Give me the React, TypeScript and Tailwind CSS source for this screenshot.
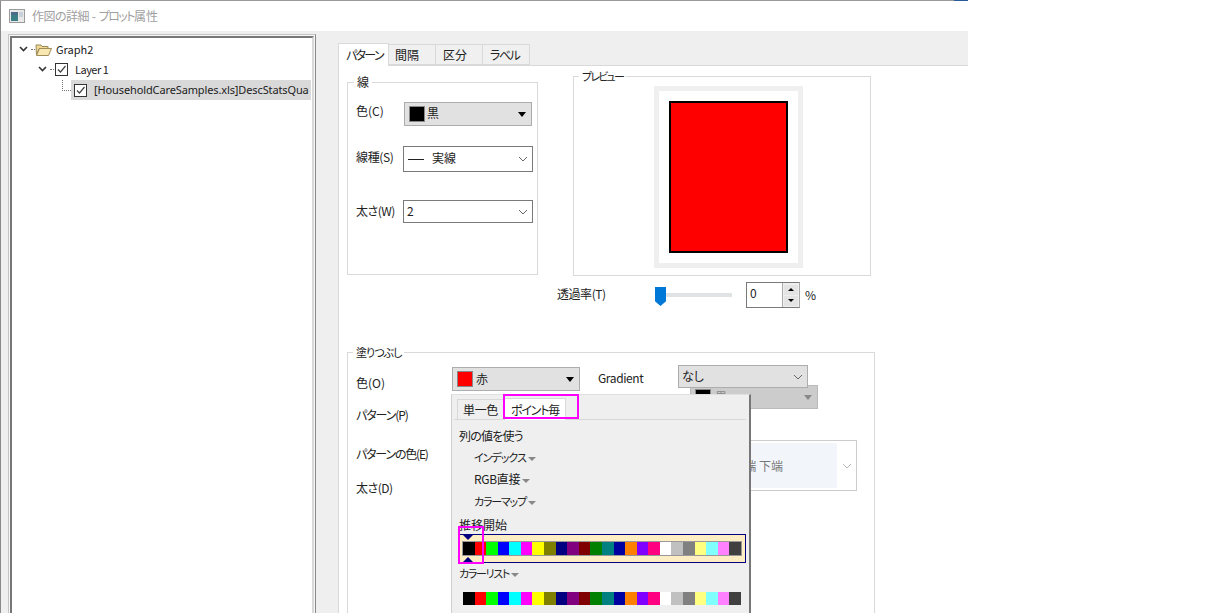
import React from "react";

const font = "font-['Noto_Sans_CJK_JP','Noto_Sans',sans-serif] [font-feature-settings:'palt']";
const colors = ["#000000","#ff0000","#00ff00","#0000ff","#00ffff","#ff00ff","#ffff00","#808000","#000080","#800080","#800000","#008000","#008080","#0000a0","#ff8000","#8000ff","#ff0080","#ffffff","#c0c0c0","#808080","#ffff80","#80ffff","#ff80ff","#404040"];

function Chevron({ className = "" }: { className?: string }) {
  return (
    <svg width="10" height="6" viewBox="0 0 10 6" className={className}>
      <path d="M1 1l4 4 4-4" fill="none" stroke="currentColor" strokeWidth="1" />
    </svg>
  );
}
function TreeChevron({ className = "" }: { className?: string }) {
  return (
    <svg width="9" height="6" viewBox="0 0 9 6" className={className}>
      <path d="M1 1l3.5 3.5L8 1" fill="none" stroke="#333333" strokeWidth="1.6" />
    </svg>
  );
}
function Caret({ className = "" }: { className?: string }) {
  return <span className={`block w-0 h-0 border-l-[4.5px] border-r-[4.5px] border-t-[5px] border-l-transparent border-r-transparent ${className}`} />;
}
function SmallCaret() {
  return <span className="inline-block w-0 h-0 ml-[2px] mb-[1px] border-l-[4px] border-r-[4px] border-t-[4px] border-l-transparent border-r-transparent border-t-[#888888] tracking-normal" />;
}
function Check({ x = 0 }: { x?: number }) {
  return (
    <span className="flex w-[13px] h-[13px] border border-[#333333] bg-white items-center justify-center shrink-0" style={{ marginLeft: x }}>
      <svg width="11" height="11" viewBox="0 0 11 11"><path d="M2 5.5l2.5 2.5 5-6" fill="none" stroke="#444444" strokeWidth="1.2" /></svg>
    </span>
  );
}
function Label({ children, className = "", small = false }: { children: React.ReactNode; className?: string; small?: boolean }) {
  return <span className={`${small ? "text-[11px]" : "text-[12px]"} leading-[16px] text-[#222222] whitespace-nowrap ${className}`}>{children}</span>;
}
function Legend({ children, className = "" }: { children: React.ReactNode; className?: string }) {
  return <span className={`absolute -top-[9px] bg-white px-[3px] leading-[16px] text-[#222222] whitespace-nowrap ${className}`}>{children}</span>;
}
function Swatches() {
  return (
    <div className="flex h-[13px] w-[278px]">
      {colors.map((c, i) => (
        <span key={i} className="h-full flex-1" style={{ backgroundColor: c }} />
      ))}
    </div>
  );
}

export default function App() {
  return (
    <div className={`relative w-[1228px] h-[613px] bg-white overflow-hidden ${font}`}>
      <div className="w-[968px] h-full flex flex-col">
        <div className="h-[1px] shrink-0 flex">
          <span className="flex-1 bg-[#9a9a9a]" />
          <span className="w-[14px] bg-[#2a5a9a]" />
        </div>
        <div className="h-[30px] flex items-center pl-[8px] gap-[7px] shrink-0 border-l border-l-[#8a8a8e]">
          <svg width="16" height="14" viewBox="0 0 16 14">
            <rect x="0.5" y="0.5" width="15" height="13" fill="#e8e8e8" stroke="#9a9a9a" />
            <rect x="2" y="3" width="7" height="9" fill="#3a7f86" />
            <rect x="2" y="3" width="7" height="3" fill="#4a6a8a" />
            <rect x="10" y="3" width="4" height="5" fill="#c8d0d8" />
          </svg>
          <span className="text-[12px] text-[#a0a0a0] whitespace-nowrap">
            <span className="tracking-[-0.5px]">作図の詳細</span> - <span className="tracking-[-1.5px]">プロット</span>属性
          </span>
        </div>
        <div className="flex-1 flex bg-[#efefef] min-h-0 border-l border-l-[#8a8a8e]">
          <div className="w-[304px] ml-[7px] mt-[3px] border border-[#c4c4c4] border-r-[#888888] bg-[#f7f7f7] p-[1px] shrink-0 box-content -mb-[4px]">
            <div className="h-full border-2 border-[#777777] border-r-[#d8d8d8] border-b-0 bg-white pt-[2px] pr-[1px] pl-[1px]">
              <div className="h-[20px] flex items-center text-[#222222] pb-[2px]">
                <TreeChevron className="ml-[6px]" />
                <span className="w-[4px] ml-[3px] border-t border-dotted border-[#777777]" />
                <svg width="17" height="15" viewBox="0 0 17 15">
                  <path d="M1 3h5l1 1.5h6v2H4L1.5 13z" fill="#f2d893" stroke="#9a8a5a" />
                  <path d="M1.5 13.5L4.5 6.5h12l-3 7z" fill="#f8e7b0" stroke="#a08d58" />
                </svg>
                <span className="ml-[4px] text-[11px] leading-[16px]">Graph2</span>
              </div>
              <div className="h-[20px] flex items-center text-[#222222] pb-[2px]">
                <TreeChevron className="ml-[25px]" />
                <span className="w-[4px] ml-[3px] border-t border-dotted border-[#777777]" />
                <Check x={1} />
                <span className="ml-[7px] text-[11px] leading-[16px] tracking-[-0.5px]">Layer 1</span>
              </div>
              <div className="h-[20px] flex items-center text-[#222222] relative">
                <span className="absolute left-[49px] top-0 h-[11px] w-[9px] border-l border-b border-dotted border-[#777777]" />
                <div className="ml-[58px] h-[20px] flex-1 bg-[#d9d9d9] flex items-center pl-[3px]">
                  <Check />
                  <span className="ml-[7px] text-[11px] whitespace-nowrap font-['Noto_Sans',sans-serif] tracking-[-0.12px]">[HouseholdCareSamples.xls]DescStatsQua</span>
                </div>
              </div>
            </div>
          </div>
          <div className="flex-1 flex flex-col pl-[22px] min-w-0">
            <div className="h-[34px] shrink-0 flex items-end pt-[11px]">
              <div className="h-[23px] w-[51px] -mb-px z-10 bg-white border border-b-0 border-[#d9d9d9] flex items-center pl-[7px]"><Label className="tracking-[-1.7px]">パターン</Label></div>
              <div className="h-[21px] w-[47px] bg-[#f0f0f0] border border-l-0 border-[#d9d9d9] flex items-center pl-[6px]"><Label>間隔</Label></div>
              <div className="h-[21px] w-[47px] bg-[#f0f0f0] border border-l-0 border-[#d9d9d9] flex items-center pl-[7px]"><Label>区分</Label></div>
              <div className="h-[21px] w-[47px] bg-[#f0f0f0] border border-l-0 border-[#d9d9d9] flex items-center pl-[7px]"><Label className="tracking-[-1.5px]">ラベル</Label></div>
            </div>
            <div className="flex-1 bg-white border-t border-l border-[#d9d9d9] relative min-h-0 pt-[16px] pl-[8px]">
              <div className="flex gap-[35px] items-start">
                <div className="relative w-[191px] h-[193px] border border-[#d9d9d9] shrink-0 pl-[8px]">
                  <Legend className="left-[6px] text-[12px]">線</Legend>
                  <div className="flex items-center pt-[19px]">
                    <Label className="w-[48px] -mt-[6px]">色(C)</Label>
                    <div className="h-[24px] w-[128px] bg-[#e1e1e1] border border-[#adadad] flex items-center pl-[4px] pr-[5px]">
                      <span className="w-[16px] h-[16px] bg-black border border-[#888888]" />
                      <Label className="ml-[2px] -mt-[2px]">黒</Label>
                      <Caret className="ml-auto border-t-black" />
                    </div>
                  </div>
                  <div className="flex items-center mt-[20px]">
                    <Label className="w-[47px] -mt-[4px] tracking-[-0.35px]">線種(S)</Label>
                    <div className="h-[26px] w-[130px] border border-[#7a7a7a] flex items-center pl-[4px] pr-[4px]">
                      <span className="w-[16px] border-t border-[#222222]" />
                      <Label className="ml-[8px] -mt-[2px]">実線</Label>
                      <Chevron className="ml-auto text-[#666666]" />
                    </div>
                  </div>
                  <div className="flex items-center mt-[28px]">
                    <Label className="w-[47px] -mt-[2px] tracking-[-0.5px]">太さ(W)</Label>
                    <div className="h-[23px] w-[130px] border border-[#7a7a7a] flex items-center pl-[3px] pr-[4px]">
                      <Label className="-mt-[2px]">2</Label>
                      <Chevron className="ml-auto text-[#666666]" />
                    </div>
                  </div>
                </div>
                <div className="w-[298px] shrink-0 -mt-[6px]">
                  <div className="relative h-[200px] border border-[#d9d9d9] flex pl-[80px] pt-[9px]">
                    <Legend className="left-[5px] text-[11px] tracking-[-1.8px]">プレビュー</Legend>
                    <div className="w-[149px] h-[182px] border-[5px] border-[#efefef] bg-white flex items-center justify-center">
                      <div className="w-[119px] h-[152px] bg-[#ff0000] border-2 border-black" />
                    </div>
                  </div>
                  <div className="flex items-center h-[26px] mt-[6px] -ml-[16px]">
                    <Label className="w-[96px] -mt-[2px] tracking-[-0.45px]">透過率(T)</Label>
                    <div className="relative w-[77px] h-[4px] bg-[#e0e3e3] ml-[2px]">
                      <span className="absolute left-0 -top-[6px] w-[11px] h-[19px] bg-[#0078d7] [clip-path:polygon(0_0,100%_0,100%_75%,50%_100%,0_75%)]" />
                    </div>
                    <div className="ml-[14px] w-[54px] h-[26px] border border-[#7a7a7a] border-r-[#aaaaaa] flex">
                      <Label className="pl-[3px] pt-[2px]">0</Label>
                      <div className="ml-auto w-[17px] h-full flex flex-col items-center justify-center gap-[1px] bg-[#efefef] border-l border-[#aaaaaa]">
                        <span className="w-[14px] h-[10px] bg-[#e4e4e4] flex items-center justify-center"><span className="w-0 h-0 border-l-[3px] border-r-[3px] border-b-[3px] border-l-transparent border-r-transparent border-b-black" /></span>
                        <span className="w-[14px] h-[10px] bg-[#e4e4e4] flex items-center justify-center"><span className="w-0 h-0 border-l-[3px] border-r-[3px] border-t-[3px] border-l-transparent border-r-transparent border-t-black" /></span>
                      </div>
                    </div>
                    <Label className="ml-[5px]">%</Label>
                  </div>
                </div>
              </div>
              <div className="relative w-[528px] h-[300px] border border-[#d9d9d9] mt-[44px]">
                <Legend className="left-[5px] text-[11px] tracking-[-1px]">塗りつぶし</Legend>
                <div className="flex flex-col pl-[8px] pt-[22px]">
                  <Label>色(O)</Label>
                  <Label className="mt-[16px] tracking-[-1.1px]">パターン(P)</Label>
                  <Label className="mt-[23px] tracking-[-1.2px]">パターンの色(E)</Label>
                  <Label className="mt-[18px] tracking-[-0.5px]">太さ(D)</Label>
                </div>
                <div className="absolute left-[104px] top-[14px] h-[24px] w-[128px] bg-[#e1e1e1] border border-[#adadad] flex items-center pl-[4px] pr-[5px]">
                  <span className="w-[16px] h-[16px] bg-[#ff0000] border border-[#888888]" />
                  <Label className="ml-[3px]">赤</Label>
                  <Caret className="ml-auto border-t-black" />
                </div>
                <Label className="absolute left-[250px] top-[17px] tracking-[-0.4px]">Gradient</Label>
                <div className="absolute left-[342px] top-[32px] h-[24px] w-[128px] bg-[#cccccc] border border-[#bbbbbb] flex items-center pl-[4px] pr-[5px]">
                  <span className="w-[16px] h-[16px] bg-black border border-[#888888]" />
                  <Label className="ml-[4px] text-[#888888]!">黒</Label>
                  <Caret className="ml-auto border-t-[#888888]" />
                </div>
                <div className="absolute left-[330px] top-[12px] h-[23px] w-[130px] bg-[#e1e1e1] border border-[#adadad] flex items-center pl-[3px] pr-[4px]">
                  <Label className="-mt-[2px]">なし</Label>
                  <Chevron className="ml-auto text-[#666666]" />
                </div>
                <div className="absolute left-[398px] top-[87px] w-[111px] h-[51px] border border-[#cccccc] bg-white flex items-center">
                  <div className="w-[90px] h-[45px] bg-[#f2f6fb] flex items-center justify-end pr-[54px]">
                    <span className="text-[12px] text-[#777777] whitespace-nowrap">上端 下端</span>
                  </div>
                  <Chevron className="ml-auto mr-[4px] text-[#bbbbbb]" />
                </div>
              </div>
            </div>
          </div>
        </div>
      </div>

      <div className="absolute left-[451px] top-[394px] w-[300px] h-[219px] bg-[#efefef] border-t border-l border-t-[#e0e0e0] border-l-[#d0d0d0] border-r-2 border-r-[#777777] pl-[2px] pr-[3px]">
        <div className="flex items-end h-[25px] border-b border-[#d8d8d8] pl-[3px]">
          <div className="h-[20px] w-[47px] border border-b-0 border-[#d8d8d8] flex items-center justify-center"><Label className="tracking-[-0.3px]">単一色</Label></div>
          <div className="relative h-[22px] w-[62px] -mb-px bg-white border border-b-0 border-[#d8d8d8] flex items-center justify-center"><Label className="tracking-[-1.2px]">ポイント毎</Label></div>
        </div>
        <div className="pl-[5px] pt-[8px]">
          <Label className="block tracking-[-0.8px]">列の値を使う</Label>
          <div className="pl-[15px] pt-[5px] flex flex-col gap-[6px]">
            <Label small className="tracking-[-1px]">インデックス<SmallCaret /></Label>
            <Label className="tracking-[-0.3px]">RGB直接<SmallCaret /></Label>
            <Label small className="tracking-[-1.2px]">カラーマップ<SmallCaret /></Label>
          </div>
          <Label className="block mt-[8px]">推移開始</Label>
        </div>
        <div className="relative ml-[4px] mt-[1px] w-[288px] h-[29px] border border-[#000080] bg-[#ffeec4] flex items-center justify-center">
          <div className="border border-[#999999]"><Swatches /></div>
          <span className="absolute left-[4px] top-0 w-0 h-0 border-l-[5px] border-r-[5px] border-t-[5px] border-l-transparent border-r-transparent border-t-[#000080]" />
          <span className="absolute left-[4px] bottom-0 w-0 h-0 border-l-[5px] border-r-[5px] border-b-[5px] border-l-transparent border-r-transparent border-b-[#000080]" />
        </div>
        <Label small className="block ml-[5px] mt-[2px] tracking-[-1.3px]">カラーリスト<SmallCaret /></Label>
        <div className="ml-[9px] mt-[11px]"><Swatches /></div>
      </div>

      <span className="absolute left-[503px] top-[394px] w-[76px] h-[25px] border-2 border-[#ff00ff]" />
      <span className="absolute left-[458px] top-[526px] w-[26px] h-[38px] border-2 border-[#ff00ff]" />
    </div>
  );
}
